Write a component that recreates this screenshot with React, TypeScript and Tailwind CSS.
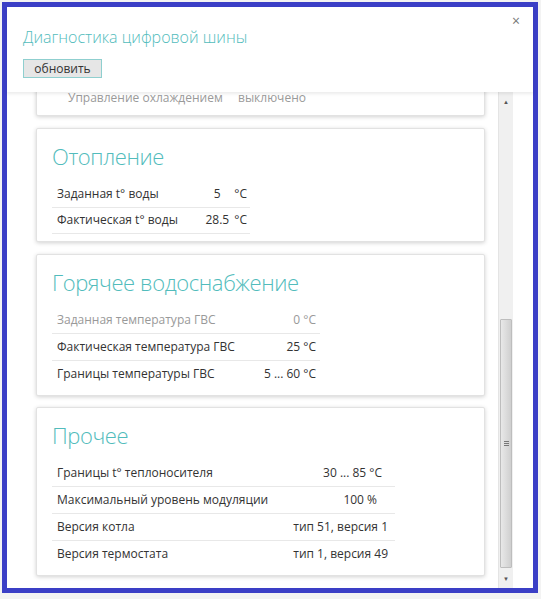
import React from "react"

type Row = { label: string; value: string; unit?: string; muted?: boolean; pr?: string }

const font = { fontFamily: '"Open Sans", "Noto Sans", sans-serif' }

const heating: Row[] = [
    { label: "Заданная t° воды", value: "5", unit: "°C" },
    { label: "Фактическая t° воды", value: "28.5", unit: "°C" },
]

const hotWater: Row[] = [
    { label: "Заданная температура ГВС", value: "0 °C", muted: true },
    { label: "Фактическая температура ГВС", value: "25 °C" },
    { label: "Границы температуры ГВС", value: "5 ... 60 °C" },
]

const other: Row[] = [
    { label: "Границы t° теплоносителя", value: "30 ... 85 °C", pr: "pr-[13px]" },
    { label: "Максимальный уровень модуляции", value: "100 %", pr: "pr-[18px]" },
    { label: "Версия котла", value: "тип 51, версия 1", pr: "pr-[7px]" },
    { label: "Версия термостата", value: "тип 1, версия 49", pr: "pr-[7px]" },
]

function Card({ title, children }: { title: string; children: React.ReactNode }) {
    return (
        <div className="bg-white border border-[#e2e2e2] rounded-[2px] shadow-[0_1px_4px_rgba(0,0,0,0.18)] px-[15px] pt-[11px] pb-[7px]">
            <h2 className="text-[22px] leading-[32px] font-light tracking-[-0.4px] text-[#52bcbc] mb-[9px]">{title}</h2>
            {children}
        </div>
    )
}

export default function App() {
    return (
        <div className="w-[541px] h-[599px] bg-[#f3f3f3] p-[2px]" style={font}>
            <div className="relative w-[536px] h-[591px] border-[5px] border-[#3b3fc6] bg-white flex flex-col">
                {/* header */}
                <div className="relative z-10 h-[85px] shrink-0 bg-white pl-[16px] pt-[17px] shadow-[0_2px_3px_rgba(0,0,0,0.08)]">
                    <div className="text-[16px] leading-[26px] font-light text-[#52bcbc]">Диагностика цифровой шины</div>
                    <button className="mt-[9px] w-[79px] h-[19px] bg-[#e6e6e6] border border-[#8fcfcf] text-[12px] leading-[17px] text-[#333]">
                        обновить
                    </button>
                    <span className="absolute right-[13px] top-[7px] text-[14px] text-[#777] leading-none">×</span>
                </div>

                {/* scroll area */}
                <div className="flex h-[496px]">
                    <div className="w-[491px] overflow-hidden pl-[29px] pr-[13px]">
                        <div className="-mt-[14px] flex flex-col gap-[12px]">
                            <div className="bg-white border border-[#e2e2e2] rounded-[2px] shadow-[0_1px_4px_rgba(0,0,0,0.18)] pt-[6px] pb-[4px]">
                                <div className="flex h-[26px] items-center text-[12px] text-[#9a9a9a] pl-[31px]">
                                    <span className="w-[170px]">Управление охлаждением</span>
                                    <span>выключено</span>
                                </div>
                            </div>

                            <Card title="Отопление">
                                <table className="w-[198px] border-collapse text-[12px] text-[#333]">
                                    <tbody>
                                        {heating.map((r) => (
                                            <tr key={r.label} className="h-[26px] border-b border-[#e8e8e8]">
                                                <td className="pl-[5px]">{r.label}</td>
                                                <td className="pr-[3px]">
                                                    <div className="flex justify-end">
                                                        <span className="w-[28px] text-center">{r.value}</span>
                                                        <span className="ml-[3px]">{r.unit}</span>
                                                    </div>
                                                </td>
                                            </tr>
                                        ))}
                                    </tbody>
                                </table>
                            </Card>

                            <Card title="Горячее водоснабжение">
                                <table className="w-[268px] border-collapse text-[12px]">
                                    <tbody>
                                        {hotWater.map((r, i) => (
                                            <tr
                                                key={r.label}
                                                className={`h-[27px] ${i < hotWater.length - 1 ? "border-b border-[#e8e8e8]" : ""} ${r.muted ? "text-[#999]" : "text-[#333]"}`}
                                            >
                                                <td className="pl-[5px]">{r.label}</td>
                                                <td className="text-right pr-[4px]">{r.value}</td>
                                            </tr>
                                        ))}
                                    </tbody>
                                </table>
                            </Card>

                            <div className="-mt-[1px]">
                                <Card title="Прочее">
                                    <table className="w-[343px] border-collapse text-[12px] text-[#333]">
                                        <tbody>
                                            {other.map((r, i) => (
                                                <tr
                                                    key={r.label}
                                                    className={`h-[27px] ${i < other.length - 1 ? "border-b border-[#e8e8e8]" : ""}`}
                                                >
                                                    <td className="pl-[5px]">{r.label}</td>
                                                    <td className={`text-right ${r.pr}`}>{r.value}</td>
                                                </tr>
                                            ))}
                                        </tbody>
                                    </table>
                                </Card>
                            </div>
                        </div>
                    </div>

                    {/* scrollbar */}
                    <div className="w-[15px] h-full bg-[#f0f0f0] border-l border-[#e4e4e4] flex flex-col items-center">
                        <div className="h-[20px] flex items-center justify-center text-[6px] text-[#555]">▲</div>
                        <div className="flex-1 w-full flex flex-col">
                            <div className="h-[207px]" />
                            <div className="flex-1 mb-[2px] mx-[1px] rounded-[1px] border border-[#bdbdbd] bg-gradient-to-r from-[#e8e8e8] via-[#dcdcdc] to-[#cfcfcf] flex items-center justify-center">
                                <div className="flex flex-col gap-[1px]">
                                    <div className="w-[5px] h-[1px] bg-[#777]" />
                                    <div className="w-[5px] h-[1px] bg-[#777]" />
                                    <div className="w-[5px] h-[1px] bg-[#777]" />
                                </div>
                            </div>
                        </div>
                        <div className="h-[18px] flex items-center justify-center text-[6px] text-[#555]">▼</div>
                    </div>
                </div>
            </div>
        </div>
    )
}
